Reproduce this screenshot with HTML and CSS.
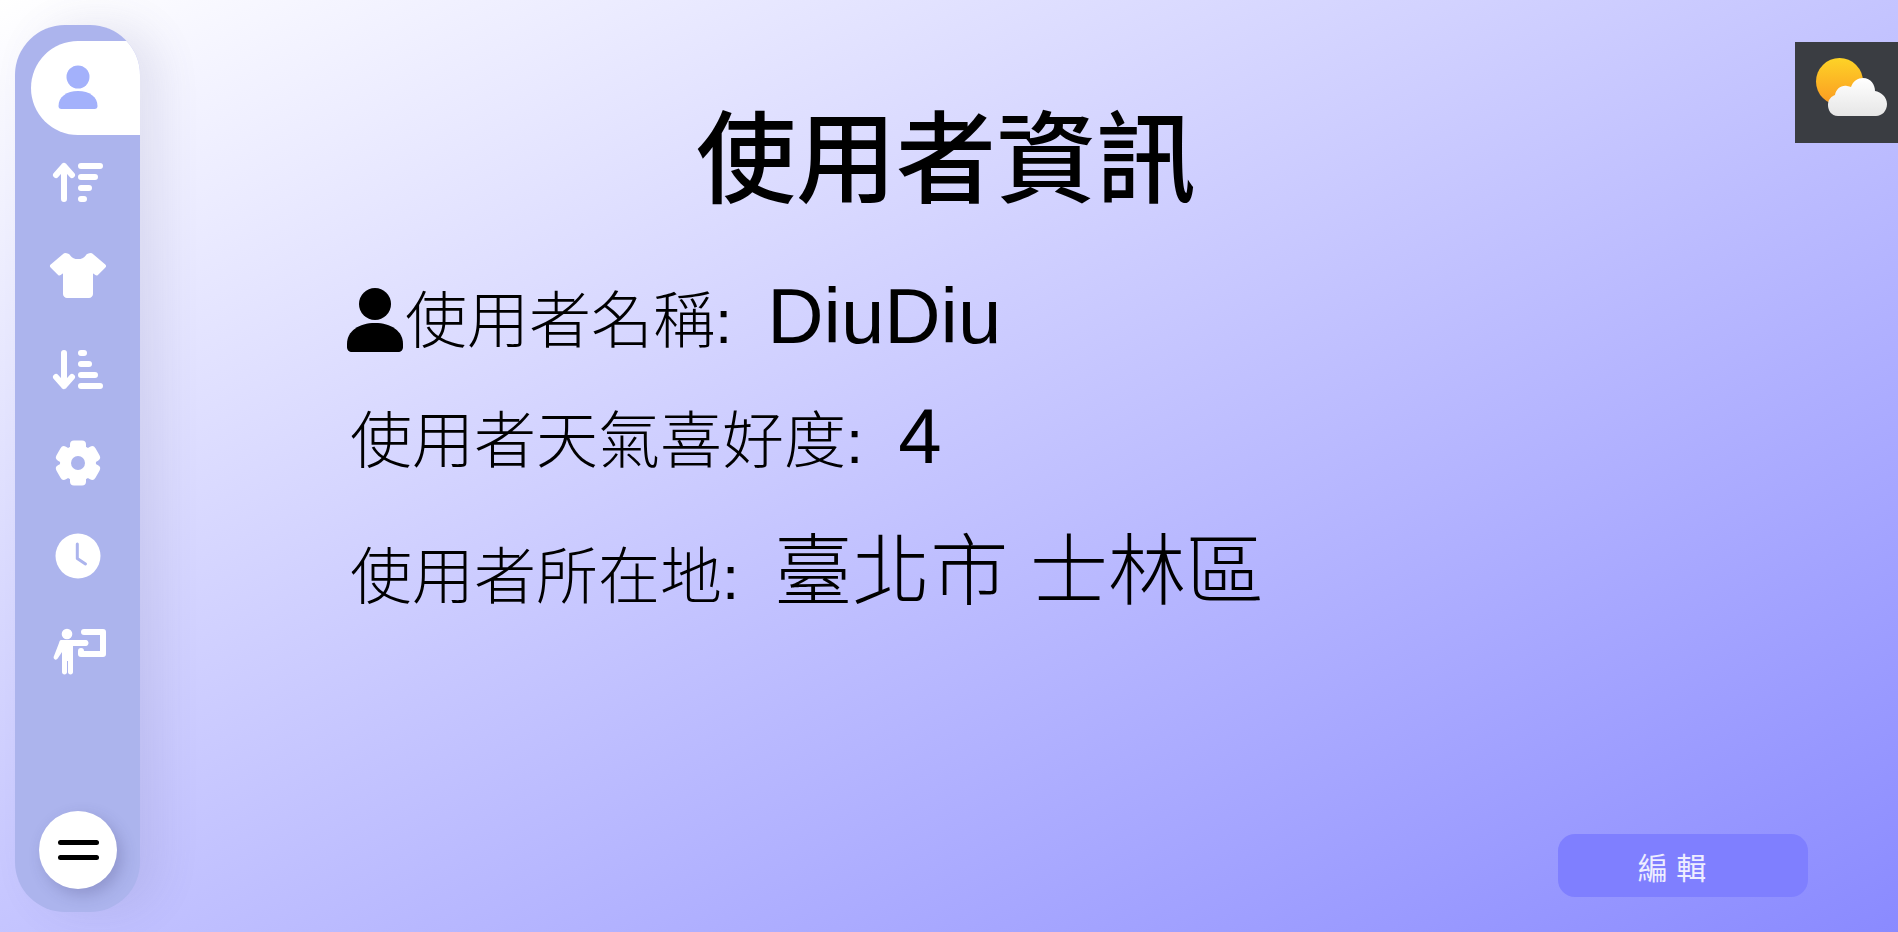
FILE: index.html
```html
<!DOCTYPE html>
<html lang="zh-TW">
<head>
    <meta charset="UTF-8">
    <meta name="viewport" content="width=device-width, initial-scale=1.0">
    <title>使用者資訊</title>
    <link rel="stylesheet" href="styles.css">
</head>
<body>
<nav class="sidebar">
    <a class="nav-item active">
        <svg viewBox="0 0 60 60" class="nav-icon"><circle cx="30" cy="19" r="11.500" fill="#a3b1fb"/><path d="M10.500 48c0-9 8-15 19.500-15s19.500 6 19.500 15c0 2-1 3-3 3h-33c-2 0-3-1-3-3z" fill="#a3b1fb"/></svg>
    </a>
    <a class="nav-item">
        <svg viewBox="0 0 60 60" class="nav-icon"><path d="M16 47V14M8 23 16 14 24 23M33 14H52M33 25H47M33 36H41M33 47H36" fill="none" stroke="#fff" stroke-width="6" stroke-linecap="round" stroke-linejoin="round"/></svg>
    </a>
    <a class="nav-item">
        <svg viewBox="0 0 60 60" class="nav-icon"><path d="M4 21 17 10c2 0 3 .5 4 2 2 3 5 4 9 4s7-1 9-4c1-1.500 2-2 4-2L56 21l-7.500 7.500-5.500-4V49c0 1-1 2-2 2H19c-1 0-2-1-2-2V24.500l-5.500 4z" fill="#fff" stroke="#fff" stroke-width="4" stroke-linejoin="round"/></svg>
    </a>
    <a class="nav-item">
        <svg viewBox="0 0 60 60" class="nav-icon"><path d="M16 14V47M8 38 16 47 24 38M33 14H36M33 25H41M33 36H47M33 47H52" fill="none" stroke="#fff" stroke-width="6" stroke-linecap="round" stroke-linejoin="round"/></svg>
    </a>
    <a class="nav-item">
        <svg viewBox="0 0 60 60" class="nav-icon"><g fill="#fff"><circle cx="30" cy="30" r="18"/><rect x="22" y="7.500" width="16" height="45" rx="4"/><rect x="22" y="7.500" width="16" height="45" rx="4" transform="rotate(60 30 30)"/><rect x="22" y="7.500" width="16" height="45" rx="4" transform="rotate(120 30 30)"/></g><circle cx="30" cy="30" r="7" fill="#acb4ed"/></svg>
    </a>
    <a class="nav-item">
        <svg viewBox="0 0 60 60" class="nav-icon"><circle cx="30" cy="30" r="22.500" fill="#fff"/><path d="M29.300 18V32.500L37.500 38" fill="none" stroke="#acb4ed" stroke-width="3" stroke-linecap="round" stroke-linejoin="round"/></svg>
    </a>
    <a class="nav-item">
        <svg viewBox="0 0 60 60" class="nav-icon"><circle cx="19" cy="14" r="5.300" fill="#fff"/><path d="M36 12H55V34H33V31" fill="none" stroke="#fff" stroke-width="6" stroke-linecap="round" stroke-linejoin="round"/><path d="M13 20H38c1.500 0 2.500 1.500 2.500 3S39.500 26 38 26H25V52c0 1.500-1 2.500-2.500 2.500S20 53.500 20 52V41h-1V52c0 1.500-1 2.500-2.500 2.500S14 53.500 14 52V32l-4 6c-1 1.500-2 2-3 1.500s-2-2-1-3.500L11 23c.5-2 1-3 2-3z" fill="#fff"/></svg>
    </a>
    <button class="menu-btn"><span class="menu-line"></span><span class="menu-line"></span></button>
</nav>

<main class="content">
    <h1 class="page-title">使用者資訊</h1>
    <div class="info-row first">
        <svg viewBox="0 0 56 64" class="user-icon"><circle cx="28" cy="16" r="16"/><path d="M0 56C0 43 12 35 28 35s28 8 28 21v3c0 3-2 5-5 5H5c-3 0-5-2-5-5z"/></svg>
        <span class="info-label">使用者名稱:</span>
        <span class="info-value">DiuDiu</span>
    </div>
    <div class="info-row">
        <span class="info-label">使用者天氣喜好度:</span>
        <span class="info-value">4</span>
    </div>
    <div class="info-row last">
        <span class="info-label">使用者所在地:</span>
        <span class="info-value">臺北市 士林區</span>
    </div>
    <button class="edit-btn">編 輯</button>
</main>

<div class="weather">
    <svg viewBox="0 0 103 101" class="weather-icon">
        <defs>
            <linearGradient id="sunFill" x1="0" y1="0" x2="0" y2="1"><stop offset="0" stop-color="#fdd327"/><stop offset="1" stop-color="#fb9a22"/></linearGradient>
            <linearGradient id="cloudFill" x1="0" y1="0" x2="0" y2="1"><stop offset="0" stop-color="#ffffff"/><stop offset="1" stop-color="#e6e6e6"/></linearGradient>
        </defs>
        <circle cx="44.500" cy="39.500" r="23.500" fill="url(#sunFill)"/>
        <path d="M43 74C36 74 33 68 33 63 33 57 37 54 40 53 41 47 46 43 52 44 54 44 55 45 56 45 58 39 63 36 68 36 76 36 80 43 80 49 86 50 92 55 92 62 92 69 87 74 81 74Z" fill="url(#cloudFill)"/>
    </svg>
</div>
</body>
</html>
```

FILE: styles.css
```css
html, body { height: 100%; }
body {
    margin: 0; display: flex; overflow: hidden;
    background: linear-gradient(to bottom right, #ffffff, #8a8aff);
    font-family: 'Liberation Sans', 'Noto Sans CJK TC', sans-serif;
    color: #000;
}

.sidebar {
    width: 125px; height: 887px; margin: 25px 0 0 15px;
    background: #acb4ed; border-radius: 50px; overflow: hidden;
    display: flex; flex-direction: column; align-items: flex-end;
    padding-top: 16px; box-sizing: border-box; position: relative;
    box-shadow: 20px 0 40px rgba(90,90,140,0.12);
}
.nav-item {
    width: 109px; height: 93.700px;
    display: flex; align-items: center; padding-left: 17px; box-sizing: border-box;
}
.nav-item.active { background: white; border-radius: 47px 0 0 47px; }
.nav-icon { width: 60px; height: 60px; }
.menu-btn {
    position: absolute; left: 24px; bottom: 23px;
    width: 78px; height: 78px; border: none; border-radius: 50%; background: white;
    box-shadow: 5px 6px 15px rgba(60,60,110,0.25);
    display: flex; flex-direction: column; align-items: center; justify-content: center; gap: 10.500px;
}
.menu-line { width: 41px; height: 5px; border-radius: 3px; background: black; }

.content {
    flex: 1; display: flex; flex-direction: column;
    padding: 0 90px 35px 0; box-sizing: border-box;
}
.page-title {
    margin: 103px 56px 0 0; text-align: center;
    font-size: 100px; line-height: 115px; font-weight: 500;
}
.info-row {
    display: flex; align-items: baseline; margin-left: 210px; height: 90px; margin-top: 30px;
}
.info-row.first { margin-top: 53px; margin-left: 207px; }
.info-row.last { margin-top: 46px; }
.info-label { font-size: 62px; font-weight: 300; line-height: 90px; }
.info-value { font-size: 78px; font-weight: 300; line-height: 90px; margin-left: 35px; }
.user-icon { width: 56px; height: 64px; margin: 8px 2px 0 0; align-self: center; }

.edit-btn {
    margin-top: auto; align-self: flex-end;
    width: 250px; height: 63px; border: none; border-radius: 17px;
    background: #7f7fff; color: #eeeeff; font-size: 30px; padding: 0 22px 0 0;
    font-family: 'Liberation Sans', 'Noto Sans CJK TC', sans-serif;
}

.weather {
    position: absolute; top: 42px; right: 0;
    width: 103px; height: 101px; background: #3a3d42;
}
.weather-icon { display: block; width: 103px; height: 101px; }
```
